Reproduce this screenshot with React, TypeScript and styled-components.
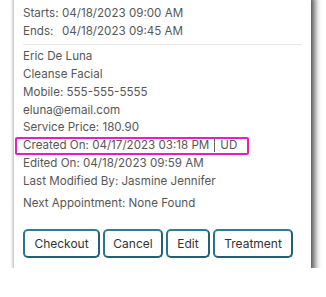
import styled, { createGlobalStyle } from 'styled-components'

const GlobalStyle = createGlobalStyle`
  body {
    margin: 0;
    background: #ffffff;
    font-family: Inter, "Noto Sans", sans-serif;
    overflow: hidden;
  }
`

const details = [
  'Eric De Luna',
  'Cleanse Facial',
  'Mobile: 555-555-5555',
  'eluna@email.com',
  'Service Price: 180.90',
]

const actions = [
  { label: 'Checkout', width: 77 },
  { label: 'Cancel', width: 60 },
  { label: 'Edit', width: 44 },
  { label: 'Treatment', width: 80 },
]

const App = () => {
  return (
    <>
      <GlobalStyle />
      <Card>
        <Line>
          <Label>Starts:</Label>04/18/2023 09:00 AM
        </Line>
        <Line>
          <Label>Ends:</Label>04/18/2023 09:45 AM
        </Line>
        <Divider />
        {details.map((d) => (
          <Line key={d}>{d}</Line>
        ))}
        <Line highlight>
          Created On: 04/17/2023 03:18 PM<Sep />UD
        </Line>
        <Line>Edited On: 04/18/2023 09:59 AM</Line>
        <Line>Last Modified By: Jasmine Jennifer</Line>
        <NextLine>Next Appointment: None Found</NextLine>
        <Actions>
          {actions.map((a) => (
            <Button key={a.label} $width={a.width}>
              {a.label}
            </Button>
          ))}
        </Actions>
      </Card>
    </>
  )
}

const Card = styled.div`
  box-sizing: border-box;
  width: 297px;
  margin: -10px 0 0 14px;
  padding: 15px 9px 10px 9px;
  background: #ffffff;
  box-shadow: 4px 6px 6px rgba(0, 0, 0, 0.65), -1px 1px 3px rgba(0, 0, 0, 0.25);
  display: flex;
  flex-direction: column;
  align-items: flex-start;
`

const Line = styled.div<{ highlight?: boolean }>`
  font-size: 11.6px;
  line-height: 17.9px;
  color: #575757;
  white-space: nowrap;
  ${(p) =>
    p.highlight &&
    `
    margin-left: -8px;
    padding: 0 12px 0 8px;
    border-radius: 2px;
    box-shadow: inset 0 0 0 2px #e41fc6;
  `}
`

const NextLine = styled(Line)`
  margin-top: 4px;
`

const Label = styled.span`
  display: inline-block;
  width: 39px;
`

const Sep = styled.span`
  display: inline-block;
  width: 1px;
  height: 14px;
  background: #666666;
  margin: 0 5px;
  vertical-align: -3px;
`

const Divider = styled.hr`
  align-self: stretch;
  border: none;
  height: 1px;
  background: #e6e6e6;
  margin: 3px 0 3px 0;
`

const Actions = styled.div`
  display: flex;
  gap: 3px;
  margin-top: 16px;
`

const Button = styled.button<{ $width: number }>`
  box-sizing: border-box;
  width: ${(p) => p.$width}px;
  height: 29px;
  padding: 0;
  font-family: Inter, "Noto Sans", sans-serif;
  font-size: 12px;
  color: #333333;
  background: #ffffff;
  border: 2px solid #226173;
  border-top-color: #2d7f93;
  border-left-color: #2a7488;
  border-radius: 5px;
`

export default App
